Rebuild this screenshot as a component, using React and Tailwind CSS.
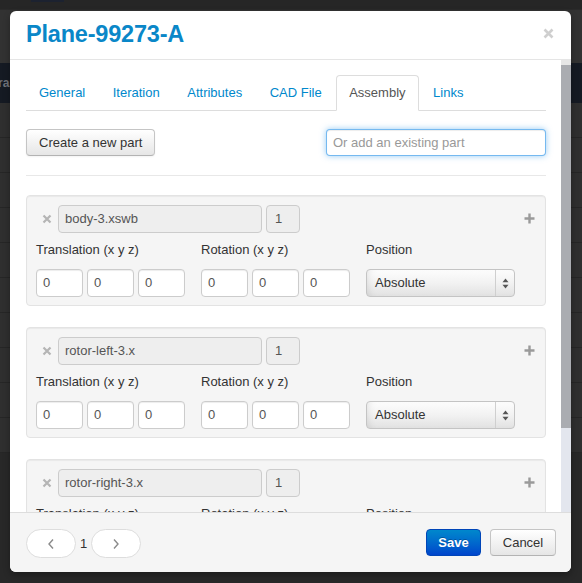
import React from "react";

const font = { fontFamily: '"Liberation Sans", Arial, Helvetica, sans-serif' };

function Chevron({ dir }) {
  return (
    <svg width="8" height="12" viewBox="0 0 8 12" fill="none">
      {dir === "left" ? (
        <path d="M6 1.5 L2 6 L6 10.5" stroke="#8a8a8a" strokeWidth="1.4" />
      ) : (
        <path d="M2 1.5 L6 6 L2 10.5" stroke="#8a8a8a" strokeWidth="1.4" />
      )}
    </svg>
  );
}

function SmallInput({ value }) {
  return (
    <div className="w-[47px] h-[28px] bg-white border border-[#cccccc] rounded-[4px] flex items-center pl-[6px] text-[13px] text-[#555] shadow-[inset_0_1px_1px_rgba(0,0,0,0.075)]">
      {value}
    </div>
  );
}

function Card({ name }) {
  return (
    <div className="h-[111px] shrink-0 bg-[#f5f5f5] border border-[#e3e3e3] rounded-[4px] pt-[9px] pl-[9px] pr-[9px] shadow-[inset_0_1px_1px_rgba(0,0,0,0.05)] mb-[21px]">
      <div className="flex items-center h-[28px]">
        <div className="w-[22px] flex justify-center">
          <svg width="10" height="10" viewBox="0 0 10 10">
            <path d="M1.5 1.5 L8.5 8.5 M8.5 1.5 L1.5 8.5" stroke="#b5b5b5" strokeWidth="2.2" />
          </svg>
        </div>
        <div className="w-[204px] h-[28px] bg-[#eeeeee] border border-[#cccccc] rounded-[4px] flex items-center pl-[6px] text-[13px] text-[#555]">
          {name}
        </div>
        <div className="ml-[4px] w-[34px] h-[28px] bg-[#eeeeee] border border-[#cccccc] rounded-[4px] flex items-center pl-[8px] text-[13px] text-[#555]">
          1
        </div>
        <div className="flex-1" />
        <svg width="11" height="11" viewBox="0 0 11 11" className="mr-[1px] mb-[2px]">
          <path d="M5.5 0.5 V10.5 M0.5 5.5 H10.5" stroke="#9a9a9a" strokeWidth="2.4" />
        </svg>
      </div>
      <div className="flex mt-[8px] h-[18px] items-center text-[13px] text-[#333]">
        <div className="w-[165px]">Translation (x y z)</div>
        <div className="w-[165px]">Rotation (x y z)</div>
        <div>Position</div>
      </div>
      <div className="flex mt-[10px]">
        <div className="w-[165px] flex gap-[4px]">
          <SmallInput value="0" />
          <SmallInput value="0" />
          <SmallInput value="0" />
        </div>
        <div className="w-[165px] flex gap-[4px]">
          <SmallInput value="0" />
          <SmallInput value="0" />
          <SmallInput value="0" />
        </div>
        <div className="w-[149px] h-[28px] border border-[#c4c4c4] rounded-[4px] flex items-center bg-gradient-to-b from-[#fdfdfd] via-[#f2f2f2] to-[#e2e2e2] shadow-[inset_6px_0_8px_-6px_rgba(0,0,0,0.12)]">
          <div className="flex-1 pl-[8px] text-[13px] text-[#333]">Absolute</div>
          <div className="w-px h-[26px] bg-[#cfcfcf]" />
          <div className="w-[18px] flex justify-center">
            <svg width="7" height="11" viewBox="0 0 7 11">
              <path d="M3.5 0.5 L6.5 4.3 H0.5 Z" fill="#555" />
              <path d="M3.5 10.5 L6.5 6.7 H0.5 Z" fill="#555" />
            </svg>
          </div>
        </div>
      </div>
    </div>
  );
}

export default function App() {
  const tabs = ["General", "Iteration", "Attributes", "CAD File", "Assembly", "Links"];
  const rows = Array.from({ length: 10 });
  return (
    <div className="w-[582px] h-[583px] relative overflow-hidden bg-[#282828]" style={font}>
      {/* background page under the backdrop */}
      <div className="flex flex-col">
        <div className="h-[9px] bg-[#262626] flex">
          <div className="ml-[31px] w-[33px] h-[2px] bg-[#1c2230]" />
        </div>
        <div className="h-[54px] bg-[#323232] border-t border-[#2a2a2a]" />
        <div className="h-[40px] bg-[#151a23] flex items-center">
          <span className="text-[12px] font-bold text-[#6f727a] -ml-[2px]">ra</span>
        </div>
        {rows.map((_, i) => (
          <div key={i} className="h-[35px] bg-[#2f2f2f] border-b border-[#262626]" />
        ))}
      </div>

      {/* modal */}
      <div className="absolute left-[10px] top-[11px] w-[561px] h-[561px] bg-white rounded-[6px] shadow-[0_3px_7px_rgba(0,0,0,0.3)] flex flex-col overflow-hidden">
        <div className="h-[49px] shrink-0 border-b border-[#e5e5e5] flex items-center justify-between pl-[16px] pr-[17px]">
          <div className="text-[23.5px] font-bold text-[#0a87c8] tracking-[-0.2px]">Plane-99273-A</div>
          <svg width="11" height="11" viewBox="0 0 11 11" className="mb-[4px]">
            <path d="M1.5 1.5 L9.5 9.5 M9.5 1.5 L1.5 9.5" stroke="#cfcfcf" strokeWidth="2.6" />
          </svg>
        </div>

        <div className="h-[452px] shrink-0 flex">
          <div className="flex-1 overflow-hidden pl-[16px] pr-[15px] pt-[15px] flex flex-col">
            <div className="flex border-b border-[#dddddd] h-[36px] shrink-0">
              {tabs.map((t) => {
                const active = t === "Assembly";
                return (
                  <div
                    key={t}
                    className={
                      active
                        ? "h-[36px] px-[12px] mr-[1.5px] flex items-center text-[13px] text-[#555] bg-white border border-[#dddddd] border-b-white rounded-t-[4px]"
                        : "h-[36px] px-[12px] mr-[1.5px] flex items-center text-[13px] text-[#0088cc] border border-transparent"
                    }
                  >
                    {t}
                  </div>
                );
              })}
            </div>

            <div className="flex justify-between mt-[18px] shrink-0">
              <div className="h-[27px] px-[12px] flex items-center text-[13px] text-[#333] border border-[#c5c5c5] border-b-[#b3b3b3] rounded-[4px] bg-gradient-to-b from-white to-[#e6e6e6] shadow-[inset_0_1px_0_rgba(255,255,255,0.2),0_1px_2px_rgba(0,0,0,0.05)]">
                Create a new part
              </div>
              <div className="w-[220px] h-[27px] flex items-center pl-[6px] text-[13px] text-[#999] bg-white border border-[rgba(82,168,236,0.8)] rounded-[4px] shadow-[inset_0_1px_1px_rgba(0,0,0,0.075),0_0_6px_rgba(82,168,236,0.6)]">
                Or add an existing part
              </div>
            </div>

            <div className="mt-[19px] h-px bg-[#e8e8e8] shrink-0" />
            <div className="mt-[19px] flex flex-col">
              <Card name="body-3.xswb" />
              <Card name="rotor-left-3.x" />
              <Card name="rotor-right-3.x" />
            </div>
          </div>
          <div className="w-[10px] shrink-0 bg-[#e3e6ee] flex flex-col">
            <div className="h-[5px] bg-[#e6e6e6]" />
            <div className="h-[363px] bg-[#aaacb1]" />
          </div>
        </div>

        <div className="flex-1 bg-[#f5f5f5] border-t border-[#dddddd] flex items-center justify-between pl-[16px] pr-[15px]">
          <div className="flex items-center mt-[2px]">
            <div className="w-[50px] h-[29px] bg-white border border-[#dddddd] rounded-full flex items-center justify-center">
              <Chevron dir="left" />
            </div>
            <div className="w-[15px] text-center text-[13px] text-[#333]">1</div>
            <div className="w-[50px] h-[29px] bg-white border border-[#dddddd] rounded-full flex items-center justify-center">
              <Chevron dir="right" />
            </div>
          </div>
          <div className="flex items-center gap-[9px]">
            <div className="h-[27px] w-[55px] flex items-center justify-center text-[13px] font-bold text-white rounded-[4px] border border-[#0045b8] bg-gradient-to-b from-[#0088cc] to-[#0044cc] [text-shadow:0_-1px_0_rgba(0,0,0,0.25)]">
              Save
            </div>
            <div className="h-[27px] w-[66px] flex items-center justify-center text-[13px] text-[#333] border border-[#c5c5c5] border-b-[#b3b3b3] rounded-[4px] bg-gradient-to-b from-white to-[#e6e6e6]">
              Cancel
            </div>
          </div>
        </div>
      </div>
    </div>
  );
}
